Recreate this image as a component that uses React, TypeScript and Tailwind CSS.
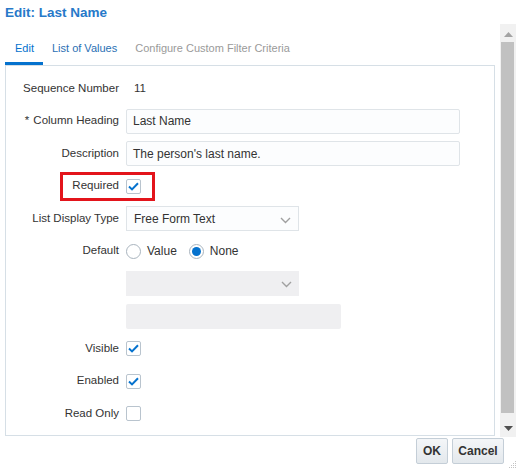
import type { ReactNode } from "react";

function Check({ on }: { on: boolean }) {
  return (
    <span className="flex h-[15px] w-[15px] items-center justify-center rounded-[2px] border border-[#b9c4ce] bg-white">
      {on && (
        <svg width="11" height="9" viewBox="0 0 11 9">
          <path d="M1 4.6 L4 7.4 L10 1.2" fill="none" stroke="#0572ce" strokeWidth="2" />
        </svg>
      )}
    </span>
  );
}

function Radio({ on }: { on: boolean }) {
  return (
    <span className="flex h-[15px] w-[15px] items-center justify-center rounded-full border border-[#a9b4be] bg-white">
      {on && <span className="h-[9px] w-[9px] rounded-full bg-[#0572ce]" />}
    </span>
  );
}

function Chevron() {
  return (
    <svg width="11" height="7" viewBox="0 0 11 7" className="absolute right-[7px] top-[10px]">
      <path d="M1 1 L5.5 5.5 L10 1" fill="none" stroke="#a0a0a0" strokeWidth="1.4" />
    </svg>
  );
}

function Row({ label, required, children }: { label: string; required?: boolean; children: ReactNode }) {
  return (
    <div className="flex h-[25px] items-center">
      <div className="w-[113px] text-right text-[#333]">
        {required && <span className="mr-[4px]">*</span>}
        {label}
      </div>
      <div className="ml-[7px] flex h-full flex-1 items-center">{children}</div>
    </div>
  );
}

export default function App() {
  return (
    <div className="relative h-[472px] w-[522px] overflow-hidden bg-white text-[11.5px] font-['Liberation_Sans',Arial,sans-serif]">
      {/* title */}
      <div className="h-[24px] pl-[5px] pt-[3px] text-[13.5px] font-bold text-[#2779c9]">Edit: Last Name</div>

      <div className="flex">
        <div className="ml-[5px] w-[490px]">
          {/* tabs */}
          <div className="flex h-[41px] items-end text-[11px]">
            <div className="border-b-[3px] border-[#0572ce] pb-[6px] pl-[10px] pr-[9px] text-[#0572ce]">Edit</div>
            <div className="pb-[9px] px-[9px] text-[#2a6fb4]">List of Values</div>
            <div className="pb-[9px] px-[9px] text-[#9a9a9a]">Configure Custom Filter Criteria</div>
          </div>

          {/* panel */}
          <div className="flex h-[371px] flex-col gap-[7.5px] border border-[#d6dfe6] pt-[10px]">
            <Row label="Sequence Number">
              <span className="pl-[8px] text-[#333]">11</span>
            </Row>
            <Row label="Column Heading" required>
              <div className="flex h-[25px] w-[334px] items-center rounded-[2px] border border-[#dfe4e8] bg-[#fcfdfe] pl-[6px] text-[12px] text-[#333]">
                Last Name
              </div>
            </Row>
            <Row label="Description">
              <div className="flex h-[25px] w-[334px] items-center rounded-[2px] border border-[#dfe4e8] bg-[#fcfdfe] pl-[6px] text-[12px] text-[#333]">
                The person's last name.
              </div>
            </Row>
            <Row label="Required">
              <Check on />
            </Row>
            <Row label="List Display Type">
              <div className="relative flex h-[25px] w-[173px] items-center border border-[#dfe4e8] bg-[#fcfdfe] pl-[7px] text-[12px] text-[#333]">
                Free Form Text
                <Chevron />
              </div>
            </Row>
            <Row label="Default">
              <Radio on={false} />
              <span className="ml-[6px] text-[12px] text-[#333]">Value</span>
              <span className="ml-[12px]">
                <Radio on />
              </span>
              <span className="ml-[6px] text-[12px] text-[#333]">None</span>
            </Row>
            <Row label="">
              <div className="relative h-[25px] w-[173px] bg-[#efeff1]">
                <Chevron />
              </div>
            </Row>
            <Row label="">
              <div className="h-[25px] w-[215px] rounded-[2px] bg-[#efeff1]" />
            </Row>
            <Row label="Visible">
              <Check on />
            </Row>
            <Row label="Enabled">
              <Check on />
            </Row>
            <Row label="Read Only">
              <Check on={false} />
            </Row>
          </div>
        </div>

        {/* scrollbar */}
        <div className="relative ml-[5px] h-[413px] w-[16px] bg-[#f1f1f1]">
          <svg width="9" height="5" viewBox="0 0 9 5" className="absolute left-[4px] top-[8px]">
            <path d="M0 5 L4.5 0 L9 5 Z" fill="#a3a3a3" />
          </svg>
          <div className="absolute left-[1px] top-[18px] h-[371px] w-[13px] bg-[#c1c1c1]" />
          <svg width="9" height="5" viewBox="0 0 9 5" className="absolute left-[4px] top-[402px]">
            <path d="M0 0 L4.5 5 L9 0 Z" fill="#505050" />
          </svg>
        </div>
      </div>

      {/* buttons */}
      <div className="mt-[1px] flex justify-end gap-[4px] pr-[18px]">
        <button className="h-[26px] w-[32px] rounded-[2px] border border-[#c4ced7] bg-gradient-to-b from-[#f4f6f8] to-[#e3e8ec] text-[12px] font-bold text-[#333]">
          OK
        </button>
        <button className="h-[26px] w-[52px] rounded-[2px] border border-[#c4ced7] bg-gradient-to-b from-[#f4f6f8] to-[#e3e8ec] text-[12px] font-bold text-[#333]">
          Cancel
        </button>
      </div>

      {/* resize grip */}
      <svg width="8" height="8" viewBox="0 0 8 8" className="absolute left-[509px] top-[461px]">
        <g fill="#c3c3c3">
          <rect x="6" y="0" width="1" height="1" />
          <rect x="4" y="2" width="1" height="1" />
          <rect x="6" y="2" width="1" height="1" />
          <rect x="2" y="4" width="1" height="1" />
          <rect x="4" y="4" width="1" height="1" />
          <rect x="6" y="4" width="1" height="1" />
          <rect x="0" y="6" width="1" height="1" />
          <rect x="2" y="6" width="1" height="1" />
          <rect x="4" y="6" width="1" height="1" />
          <rect x="6" y="6" width="1" height="1" />
        </g>
      </svg>

      {/* annotation */}
      <div className="pointer-events-none absolute left-[60px] top-[172px] h-[29px] w-[95px] border-[3px] border-[#e3141b]" />
    </div>
  );
}
